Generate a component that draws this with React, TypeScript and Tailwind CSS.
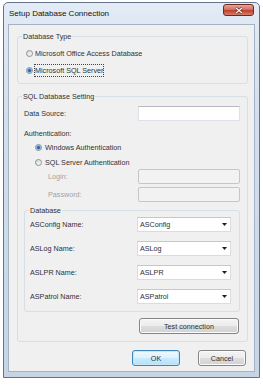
import React from 'react';

function Radio({ checked }: { checked?: boolean }) {
  return (
    <span className="w-[7px] h-[7px] rounded-full border border-[#8c8f92] bg-gradient-to-br from-[#d4d6d8] to-[#fbfbfb] flex items-center justify-center shrink-0">
      {checked && (
        <span className="w-[3px] h-[3px] rounded-full bg-[#2c62a0] shadow-[0_0_0_1px_#7fb0e0]" />
      )}
    </span>
  );
}

function Combo({ value }: { value: string }) {
  return (
    <div className="w-[94px] h-[15px] bg-white border border-[#d9dce1] border-t-[#c4c7cc] flex items-center justify-between pl-[2px] pr-[3px]">
      <span>{value}</span>
      <svg width="5" height="3" viewBox="0 0 5 3">
        <polygon points="0,0 5,0 2.5,3" fill="#1e1e1e" />
      </svg>
    </div>
  );
}

const buttonClass =
  'h-[16px] rounded-[3px] border border-[#858585] bg-[linear-gradient(#f4f4f4,#ececec_50%,#dedede_50%,#d2d2d2)] shadow-[inset_0_0_0_1px_#fbfbfb] flex items-center justify-center';

export default function App() {
  const dbRows = [
    { label: 'ASConfig Name:', value: 'ASConfig' },
    { label: 'ASLog Name:', value: 'ASLog' },
    { label: 'ASLPR Name:', value: 'ASLPR' },
    { label: 'ASPatrol Name:', value: 'ASPatrol' },
  ];

  return (
    <div className="w-[263px] h-[386px] bg-white pl-[3px] pt-[2px] font-['Liberation_Sans',Arial,sans-serif] text-[7.2px] text-[#303030] leading-[9px]">
      <div className="w-[257px] h-[376px] flex flex-col rounded-t-[5px] border border-[#62748b] bg-[linear-gradient(#e3ebf5,#d3dfec_30%,#c6d4e4)]">
        {/* Title bar */}
        <div className="h-[21px] shrink-0 flex justify-between items-start">
          <span className="ml-[5px] mt-[6px] text-[8px] leading-[10px] text-[#111]">Setup Database Connection</span>
          <div className="mt-[1px] mr-[5px] w-[31px] h-[12px] rounded-[3px] border border-[#6b2a22] bg-[linear-gradient(#e7a597,#d37060_45%,#c2412f_55%,#d3806b)] flex items-center justify-center">
            <svg width="8" height="7" viewBox="0 0 8 7">
              <path d="M1 1 L7 6 M7 1 L1 6" stroke="#5a2018" strokeWidth="2.4" />
              <path d="M1 1 L7 6 M7 1 L1 6" stroke="#ffffff" strokeWidth="1.3" />
            </svg>
          </div>
        </div>

        {/* Client area */}
        <div className="mx-[4px] flex-1 bg-[#f0f0f0] border border-[#a3b2c4] flex flex-col">
          {/* Database Type */}
          <fieldset className="mt-[7px] ml-[8px] w-[231px] border border-[#d5dfe5] rounded-[3px]">
            <legend className="ml-[4px] px-[1px]">Database Type</legend>
            <div className="pl-[8px] pt-[4px] pb-[4px] flex flex-col">
              <div className="h-[17px] flex items-center gap-[2px]">
                <Radio />
                <span>Microsoft Office Access Database</span>
              </div>
              <div className="h-[17px] flex items-center gap-[2px]">
                <Radio checked />
                <span className="outline outline-1 outline-dotted outline-[#444] py-[1px]">Microsoft SQL Server</span>
              </div>
            </div>
          </fieldset>

          {/* SQL Database Setting */}
          <fieldset className="mt-[8px] ml-[8px] w-[231px] border border-[#d5dfe5] rounded-[3px]">
            <legend className="ml-[4px] px-[1px]">SQL Database Setting</legend>
            <div className="pl-[6px] pr-[7px] pb-[7px] flex flex-col">
              <div className="mt-[5px] h-[15px] flex items-center">
                <span className="w-[114px]">Data Source:</span>
                <div className="w-[102px] h-[15px] bg-white border border-[#dde1e7] border-t-[#b7babf]" />
              </div>
              <div className="mt-[8px] h-[10px] leading-[10px]">Authentication:</div>
              <div className="mt-[1px] h-[15px] pl-[11px] flex items-center gap-[3px]">
                <Radio checked />
                <span>Windows Authentication</span>
              </div>
              <div className="h-[14px] pl-[11px] flex items-center gap-[3px]">
                <Radio />
                <span>SQL Server Authentication</span>
              </div>
              <div className="h-[15px] flex items-center">
                <span className="w-[114px] pl-[24px] text-[#a3a3a3]">Login:</span>
                <div className="w-[102px] h-[15px] rounded-[2px] bg-[#f2f2f2] border border-[#c6c6c6]" />
              </div>
              <div className="mt-[3px] h-[15px] flex items-center">
                <span className="w-[114px] pl-[24px] text-[#a3a3a3]">Password:</span>
                <div className="w-[102px] h-[15px] rounded-[2px] bg-[#f2f2f2] border border-[#c6c6c6]" />
              </div>

              {/* Database */}
              <fieldset className="mt-[4px] border border-[#d5dfe5] rounded-[3px]">
                <legend className="ml-[4px] px-[1px]">Database</legend>
                <div className="pl-[5px] pr-[8px] pt-[2px] pb-[7px] flex flex-col gap-[9px]">
                  {dbRows.map((row) => (
                    <div key={row.label} className="h-[15px] flex items-center">
                      <span className="w-[107px]">{row.label}</span>
                      <Combo value={row.value} />
                    </div>
                  ))}
                </div>
              </fieldset>

              <button className={`${buttonClass} mt-[6px] self-end mr-[1px] w-[100px]`}>Test connection</button>
            </div>
          </fieldset>

          {/* Dialog buttons */}
          <div className="mt-[8px] pr-[8px] flex justify-end gap-[18px]">
            <button className="w-[48px] h-[16px] rounded-[3px] border border-[#3c85bd] bg-[linear-gradient(#eef8fe,#dff2fd_50%,#c9ebfd_50%,#b8e0f7)] shadow-[inset_0_0_0_1px_#c4e8fb] flex items-center justify-center">
              OK
            </button>
            <button className={`${buttonClass} w-[48px]`}>Cancel</button>
          </div>
        </div>
        <div className="h-[5px] shrink-0" />
      </div>
    </div>
  );
}
